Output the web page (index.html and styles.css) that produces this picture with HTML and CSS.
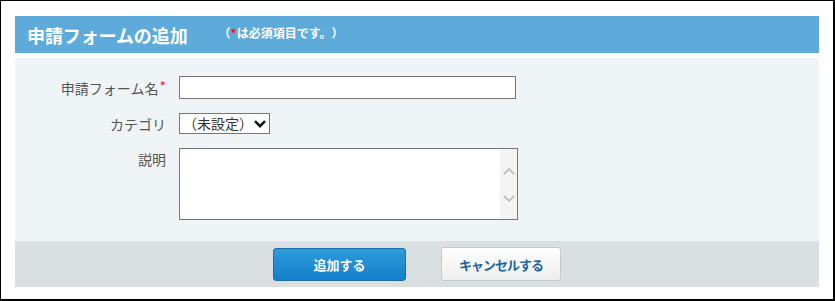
FILE: index.html
```html
<!DOCTYPE html>
<html lang="ja">
<head>
<meta charset="utf-8">
<title>申請フォームの追加</title>
<link rel="stylesheet" href="styles.css">
</head>
<body>
<div class="frame">
  <div class="header">
    <span class="title">申請フォームの追加</span>
    <span class="note">（<span class="req">*</span>は必須項目です。）</span>
  </div>
  <div class="form">
    <label class="label label-mid" for="fname">申請フォーム名<span class="req-s">*</span></label>
    <div class="ctrl"><input id="fname" class="text" type="text"></div>

    <span class="label label-mid">カテゴリ</span>
    <div class="ctrl">
      <div class="select" role="combobox" aria-expanded="false">
        <span class="select-val">（未設定）</span>
        <svg class="chev" width="12" height="8" viewBox="0 0 12 8"><path d="M1 1.2 L6 6.2 L11 1.2" fill="none" stroke="#111" stroke-width="2.4"/></svg>
      </div>
    </div>

    <label class="label label-top" for="desc">説明</label>
    <div class="ctrl">
      <div class="tbox">
        <textarea id="desc"></textarea>
        <div class="sbar">
          <svg width="12" height="8" viewBox="0 0 12 8"><path d="M1 7 L6 2 L11 7" fill="none" stroke="#c2c2c2" stroke-width="1.8"/></svg>
          <svg width="12" height="8" viewBox="0 0 12 8"><path d="M1 1 L6 6 L11 1" fill="none" stroke="#c2c2c2" stroke-width="1.8"/></svg>
        </div>
      </div>
    </div>
  </div>
  <div class="footer">
    <button class="btn btn-primary" type="button">追加する</button>
    <button class="btn btn-cancel" type="button">キャンセルする</button>
  </div>
</div>
</body>
</html>
```
FILE: styles.css
```css
html, body {
  margin: 0;
  padding: 0;
  background: #fff;
}
body {
  font-family: "Noto Sans CJK JP", "Noto Sans", sans-serif;
  text-spacing-trim: space-all;
}
.frame {
  width: 835px;
  height: 301px;
  box-sizing: border-box;
  border-top: 1px solid #000;
  border-left: 1px solid #000;
  border-right: 2px solid #000;
  border-bottom: 2px solid #000;
  padding: 15px 14px 0 14px;
  background: #fff;
}
.header {
  height: 37px;
  background: #5eabdb;
  display: flex;
  align-items: center;
  padding-left: 12px;
  color: #fff;
}
.title {
  font-size: 18px;
  font-weight: bold;
  line-height: 22px;
  letter-spacing: -0.1px;
}
.note {
  font-size: 12px;
  font-weight: bold;
  line-height: 16px;
  margin-left: 31px;
  margin-top: -3px;
}
.req {
  color: #e8141e;
}
.form {
  margin-top: 5px;
  background: #eff4f7;
  padding: 18px 0 21px 0;
  display: grid;
  grid-template-columns: 151px auto;
  column-gap: 13px;
  row-gap: 14px;
}
.label {
  font-size: 14px;
  color: #555;
  text-align: right;
  line-height: 20px;
}
.label-mid {
  align-self: center;
}
.label-top {
  padding-top: 1px;
}
.req-s {
  color: #ec1c3c;
  font-size: 14px;
  vertical-align: top;
  line-height: 16px;
  margin-left: 1px;
}
.ctrl {
  display: flex;
}
.text {
  width: 337px;
  height: 23px;
  box-sizing: border-box;
  border: 1px solid #767676;
  margin: 0;
  padding: 0 4px;
  background: #fff;
  font-family: inherit;
  font-size: 14px;
  outline: none;
}
.select {
  width: 91px;
  height: 21px;
  box-sizing: border-box;
  border: 1px solid #767676;
  background: #fff;
  display: flex;
  align-items: center;
  justify-content: space-between;
  padding: 0 3px 0 3px;
}
.select-val {
  font-size: 14px;
  line-height: 19px;
  color: #333;
  white-space: nowrap;
}
.chev {
  display: block;
  flex: none;
}
.tbox {
  width: 339px;
  height: 72px;
  box-sizing: border-box;
  border: 1px solid #767676;
  background: #fff;
  display: flex;
}
.tbox textarea {
  flex: 1;
  border: none;
  resize: none;
  outline: none;
  margin: 0;
  padding: 2px 4px;
  font-family: inherit;
  font-size: 14px;
  background: #fff;
}
.sbar {
  width: 17px;
  background: #f4f4f4;
  display: flex;
  flex-direction: column;
  align-items: center;
  padding-top: 18px;
  gap: 20px;
  box-sizing: border-box;
}
.sbar svg {
  display: block;
}
.footer {
  height: 46px;
  background: #dadfe2;
  display: flex;
  justify-content: center;
  align-items: center;
  gap: 35px;
}
.btn {
  font-family: inherit;
  font-size: 13px;
  font-weight: bold;
  border-radius: 3px;
  margin: 0;
  padding: 0;
  cursor: pointer;
}
.btn-primary {
  width: 133px;
  height: 33px;
  color: #fff;
  border: 1px solid #1c6ea8;
  background: linear-gradient(#2d9ada, #1580cb);
}
.btn-cancel {
  width: 120px;
  height: 34px;
  color: #1a65a5;
  border: 1px solid #c3cbd0;
  background: linear-gradient(#ffffff, #eeeeee);
  letter-spacing: -1px;
}
```
